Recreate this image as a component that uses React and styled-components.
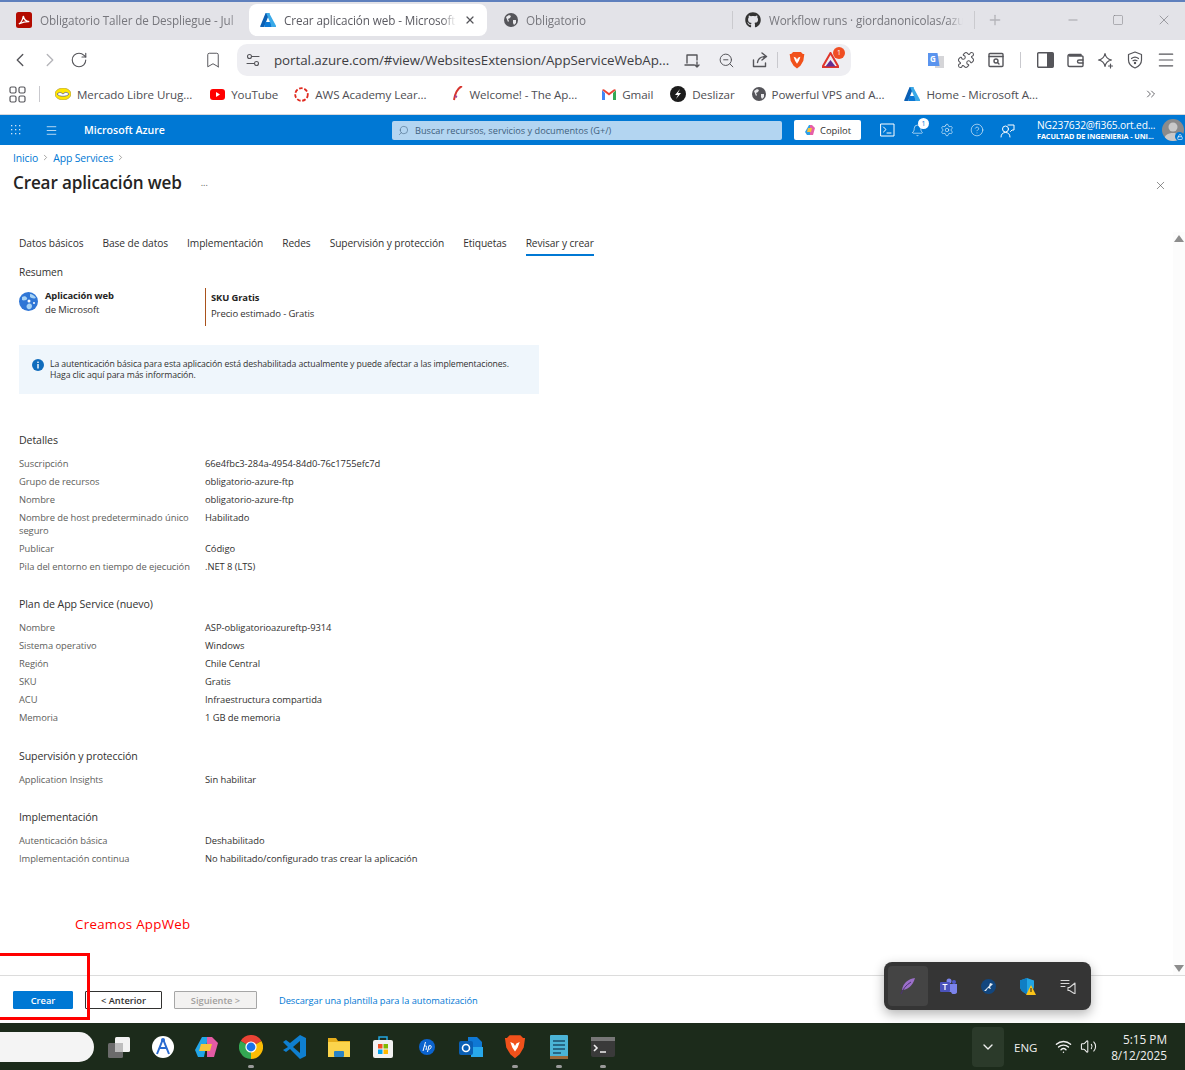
import React from "react";
import styled, { createGlobalStyle } from "styled-components";
import {
  Bell,
  ChevronDown,
  ChevronLeft,
  ChevronRight,
  ChevronsRight,
  CircleHelp,
  Lock,
  Menu,
  Minus,
  Plus,
  Puzzle,
  RotateCw,
  Search,
  Settings,
  Square,
  Wifi,
  X,
  Volume2,
  ZoomOut,
  Bookmark,
} from "lucide-react";
import { FaGithub } from "react-icons/fa";

const FONT = `"Open Sans", "Noto Sans", sans-serif`;

const Global = createGlobalStyle`
  html, body { margin: 0; padding: 0; background: #fff; }
  body { font-family: ${FONT}; color: #323130; }
  * { box-sizing: border-box; }
`;

const Page = styled.div`
  position: relative;
  width: 1185px;
  height: 1070px;
  overflow: hidden;
  display: flex;
  flex-direction: column;
  background: #fff;
`;

/* browser chrome */
const TabStrip = styled.div`
  height: 40px;
  flex: none;
  display: flex;
  align-items: flex-start;
  padding: 2px 0 0 11px;
  background: #e3e3e8;
  border-top: 2px solid #5f80bd;
`;
const BrowserTab = styled.div`
  width: ${(p) => p.$w}px;
  height: 32px;
  flex: none;
  display: flex;
  align-items: center;
  gap: 8px;
  padding: 0 ${(p) => p.$pad || 5}px;
  font-size: 11.7px;
  letter-spacing: -0.1px;
  color: ${(p) => (p.$active ? "#5b5b62" : "#77777d")};
  background: ${(p) => (p.$active ? "#fff" : "transparent")};
  border-radius: ${(p) => (p.$active ? "8px" : "0")};
  position: relative;
  ${(p) =>
    p.$sep &&
    `&::after{content:"";position:absolute;right:0;top:7px;height:18px;width:1px;background:#cacace;}`}
`;
const TabTitle = styled.span`
  flex: 1;
  min-width: 0;
  white-space: nowrap;
  overflow: hidden;
  mask-image: linear-gradient(to right, #000 92%, transparent);
`;
const PlusSlot = styled.div`
  width: 40px;
  flex: none;
  height: 32px;
  display: flex;
  align-items: center;
  justify-content: center;
  color: #b4b4b9;
`;
const WindowButtons = styled.div`
  margin-left: auto;
  width: 135px;
  height: 32px;
  display: flex;
  align-items: center;
  gap: 32px;
  padding-left: 16px;
  color: #77777d;
`;
const Toolbar = styled.div`
  height: 40px;
  flex: none;
  display: flex;
  align-items: center;
  color: #55555a;
  background: #fff;
  padding-left: 9px;
`;
const NavGroup = styled.div`
  display: flex;
  align-items: center;
  gap: 8px;
  width: 228px;
`;
const AddressBar = styled.div`
  width: 614px;
  height: 32px;
  flex: none;
  display: flex;
  align-items: center;
  border-radius: 10px;
  background: #eeeef2;
  padding: 0 12px 0 9px;
`;
const Url = styled.span`
  flex: 1;
  margin-left: 14px;
  font-size: 13.35px;
  letter-spacing: -0.05px;
  color: #3d3d42;
  white-space: nowrap;
`;
const BarIcons = styled.div`
  display: flex;
  align-items: center;
  gap: 17px;
`;
const BarDivider = styled.div`
  width: 1px;
  height: 16px;
  background: #c9c9ce;
  margin: ${(p) => p.$m || "0"};
`;
const ExtIcons = styled.div`
  display: flex;
  align-items: center;
  gap: 13px;
  margin-left: 77px;
`;
const Bookmarks = styled.div`
  height: 35px;
  flex: none;
  display: flex;
  align-items: center;
  padding: 0 0 6px 9px;
  background: #fff;
  border-bottom: 1px solid #d8d8dc;
  color: #55555a;
  font-size: 11.6px;
  letter-spacing: -0.08px;
`;
const BookmarkItem = styled.div`
  display: flex;
  align-items: center;
  gap: 6px;
  margin-left: ${(p) => p.$ml}px;
  white-space: nowrap;
  color: #4e4e53;
`;

/* portal header */
const PortalBar = styled.header`
  height: 30px;
  flex: none;
  display: flex;
  align-items: center;
  background: #0078d4;
  color: #fff;
  padding-left: 10px;
`;
const Brand = styled.div`
  width: 347px;
  margin-left: 23px;
  display: flex;
  align-items: center;
  gap: 26px;
  font-size: 10.6px;
  font-weight: 600;
`;
const SearchBox = styled.div`
  width: 390px;
  height: 19px;
  flex: none;
  display: flex;
  align-items: center;
  gap: 6px;
  padding-left: 6px;
  border-radius: 2px;
  background: #b3d5f1;
  font-size: 9.2px;
  color: #3f5f7d;
`;
const CopilotButton = styled.div`
  width: 67px;
  height: 20px;
  margin-left: 12px;
  flex: none;
  display: flex;
  align-items: center;
  justify-content: center;
  gap: 4px;
  border-radius: 2px;
  background: #fff;
  color: #323130;
  font-size: 9.4px;
  font-weight: 500;
`;
const PortalIcons = styled.div`
  margin-left: 19px;
  display: flex;
  align-items: center;
  gap: 16px;
  width: 157px;
`;
const BellSlot = styled.div`
  position: relative;
  display: flex;
`;
const BellBadge = styled.span`
  position: absolute;
  top: -6px;
  right: -5px;
  width: 11px;
  height: 11px;
  border-radius: 50%;
  background: #fff;
  color: #0078d4;
  font-size: 7px;
  line-height: 11px;
  text-align: center;
`;
const Account = styled.div`
  width: 125px;
  flex: none;
  font-size: 10.2px;
  line-height: 12px;
  letter-spacing: -0.15px;
  white-space: nowrap;
`;
const AccountOrg = styled.div`
  font-size: 7.3px;
  font-weight: 700;
  line-height: 11px;
  letter-spacing: -0.1px;
`;
const AvatarSlot = styled.div`
  position: relative;
  width: 22px;
  height: 22px;
  flex: none;
`;
const Avatar = styled.div`
  width: 22px;
  height: 22px;
  border-radius: 50%;
  background: #8b8b8b;
  overflow: hidden;
  display: flex;
`;
const LockBadge = styled.span`
  position: absolute;
  right: 0;
  bottom: 0;
  width: 9px;
  height: 9px;
  display: flex;
  align-items: center;
  justify-content: center;
  border-radius: 50%;
  background: #0078d4;
`;

/* blade */
const Blade = styled.main`
  flex: 1;
  min-height: 0;
  display: flex;
  flex-direction: column;
`;
const BladeHead = styled.div`
  height: 87px;
  flex: none;
  padding: 6px 18px 0 13px;
`;
const Breadcrumb = styled.div`
  display: flex;
  align-items: center;
  gap: 3px;
  height: 13px;
  font-size: 10.4px;
  letter-spacing: -0.1px;
  color: #0078d4;
`;
const TitleRow = styled.div`
  margin-top: 6px;
  display: flex;
  align-items: center;
  height: 24px;
`;
const Title = styled.h1`
  margin: 0;
  font-size: 17.1px;
  font-weight: 600;
  letter-spacing: -0.15px;
  color: #252423;
`;
const More = styled.span`
  margin-left: 19px;
  font-size: 9px;
  color: #605e5c;
`;
const CloseSlot = styled.div`
  margin-left: auto;
  margin-top: 7px;
  display: flex;
  color: #555;
`;
const BladeBody = styled.div`
  flex: 1;
  min-height: 0;
  display: flex;
`;
const Scroller = styled.div`
  flex: 1;
  min-width: 0;
  padding-left: 19px;
`;
const ScrollRail = styled.div`
  width: 12px;
  flex: none;
  display: flex;
  flex-direction: column;
  justify-content: space-between;
  align-items: center;
  padding: 3px 0 3px;
  background: #fcfcfc;
`;
const Arrow = styled.div`
  width: 0;
  height: 0;
  border-left: 5px solid transparent;
  border-right: 5px solid transparent;
  ${(p) => (p.$down ? "border-top: 7px solid #8d8d8d;" : "border-bottom: 7px solid #8d8d8d;")}
`;
const FormTabs = styled.nav`
  display: flex;
  gap: 19px;
  height: 24px;
`;
const FormTab = styled.div`
  height: 24px;
  line-height: 22px;
  font-size: 10.2px;
  letter-spacing: -0.08px;
  white-space: nowrap;
  color: #323130;
  border-bottom: 2px solid ${(p) => (p.$active ? "#0078d4" : "transparent")};
`;
const Resumen = styled.div`
  margin-top: 9px;
  font-size: 10.2px;
  line-height: 14px;
  letter-spacing: -0.1px;
`;
const Summary = styled.section`
  margin-top: 9px;
  display: flex;
  height: 38px;
`;
const Product = styled.div`
  width: 186px;
  display: flex;
  gap: 7px;
  padding-top: 1px;
`;
const ProductIcon = styled.div`
  padding-top: 3px;
  display: flex;
`;
const Strong = styled.div`
  font-size: 9.4px;
  font-weight: 700;
  line-height: 14px;
  letter-spacing: -0.1px;
  color: #252423;
`;
const Muted = styled.div`
  font-size: 9.5px;
  line-height: 14px;
  letter-spacing: -0.1px;
`;
const Sku = styled.div`
  border-left: 1px solid #a9521c;
  padding: 3px 0 0 5px;
  & > div + div {
    margin-top: 2px;
  }
`;
const Banner = styled.div`
  margin-top: 19px;
  width: 520px;
  height: 49px;
  display: flex;
  gap: 6px;
  padding: 14px 12px 0 13px;
  background: #eff6fc;
  font-size: 8.7px;
  line-height: 11px;
  letter-spacing: -0.1px;
  color: #323130;
`;
const BannerIcon = styled.div`
  display: flex;
  flex: none;
  width: 12px;
`;
const Group = styled.section`
  margin-top: ${(p) => p.$mt}px;
`;
const GroupTitle = styled.h2`
  margin: 0 0 8px;
  font-size: 10.6px;
  font-weight: 500;
  line-height: 14px;
  letter-spacing: -0.1px;
  color: #323130;
`;
const Row = styled.div`
  display: grid;
  grid-template-columns: 186px 1fr;
  padding: 2px 0 3px;
  font-size: 9.4px;
  line-height: 13px;
  letter-spacing: -0.06px;
`;
const RowLabel = styled.div`
  color: #605e5c;
  padding-right: 8px;
`;
const RowValue = styled.div`
  color: #323130;
`;
const Footer = styled.footer`
  height: 48px;
  flex: none;
  display: flex;
  align-items: center;
  gap: 12px;
  padding: 1px 0 0 13px;
  border-top: 1px solid #dcdcdc;
`;
const ActionButton = styled.button`
  width: ${(p) => p.$w}px;
  height: 18px;
  padding: 0;
  border-radius: 1px;
  font-family: ${FONT};
  font-size: 9.3px;
  font-weight: 600;
  ${(p) =>
    p.$kind === "primary"
      ? "background:#0078d4;border:1px solid #0078d4;color:#fff;"
      : p.$kind === "disabled"
      ? "background:#f3f2f1;border:1px solid #a6a6a6;color:#a19f9d;"
      : "background:#fff;border:1px solid #323130;color:#323130;"}
`;
const DownloadLink = styled.span`
  margin-left: 10px;
  font-size: 9.3px;
  letter-spacing: -0.05px;
  color: #0078d4;
`;

/* taskbar */
const Taskbar = styled.div`
  height: 47px;
  flex: none;
  display: flex;
  align-items: center;
  background: #1c2b1b;
  color: #f0f0f0;
`;
const SearchPill = styled.div`
  width: 94px;
  height: 30px;
  flex: none;
  background: #f4f4f4;
  border-radius: 0 15px 15px 0;
`;
const AppRow = styled.div`
  margin-left: 3px;
  display: flex;
`;
const AppSlot = styled.div`
  position: relative;
  width: 44px;
  height: 47px;
  display: flex;
  align-items: center;
  justify-content: center;
  ${(p) =>
    p.$open &&
    `&::after{content:"";position:absolute;left:19px;bottom:2px;width:6px;height:3px;border-radius:2px;background:#9a9a9a;}`}
`;
const TrayArea = styled.div`
  margin-left: auto;
  display: flex;
  align-items: center;
  height: 47px;
`;
const TrayToggle = styled.div`
  width: 32px;
  height: 40px;
  display: flex;
  align-items: center;
  justify-content: center;
  border-radius: 4px;
  background: #2b3a2a;
`;
const Lang = styled.div`
  margin: 1px 0 0 10px;
  font-size: 11.5px;
  width: 30px;
`;
const TrayStatus = styled.div`
  margin-left: 11px;
  display: flex;
  align-items: center;
  gap: 8px;
`;
const Clock = styled.div`
  margin: 0 18px 0 12px;
  text-align: right;
  font-size: 11.8px;
  line-height: 16px;
  width: 58px;
`;

/* overlays */
const TrayPopup = styled.div`
  position: absolute;
  left: 884px;
  top: 962px;
  width: 207px;
  height: 48px;
  display: flex;
  align-items: center;
  padding-left: 4px;
  border-radius: 8px;
  background: #353535;
  box-shadow: 0 4px 12px rgba(0, 0, 0, 0.3);
`;
const PopupSlot = styled.div`
  width: 40px;
  height: 40px;
  display: flex;
  align-items: center;
  justify-content: center;
  border-radius: 4px;
  background: ${(p) => (p.$hot ? "#444" : "transparent")};
`;
const RedBox = styled.div`
  position: absolute;
  left: -10px;
  top: 953px;
  width: 100px;
  height: 67px;
  border: 3px solid #f00;
`;
const RedNote = styled.div`
  position: absolute;
  left: 75px;
  top: 915px;
  font-size: 13.3px;
  line-height: 18px;
  letter-spacing: 0.3px;
  color: #f00;
`;

/* drawn logos */
const AzureLogo = ({ size = 16 }) => (
  <svg width={size} height={size} viewBox="0 0 16 16">
    <path d="M5.6 1h4L4.3 14.6a.7.7 0 0 1-.7.4H.8a.6.6 0 0 1-.6-.8z" fill="#0a5fb4" />
    <path d="M11.6 10H5.2l-1 4.9h7.6z" fill="#0b78d4" />
    <path d="M9.4 1.4c-.1-.3-.4-.4-.7-.4H5.6c.3 0 .6.1.7.4l5.5 13.2c.1.2.3.4.6.4h3.2a.6.6 0 0 0 .6-.8z" fill="#39a9e8" />
  </svg>
);
const PdfLogo = () => (
  <svg width="16" height="16" viewBox="0 0 16 16">
    <rect width="16" height="16" rx="2.5" fill="#b30b00" />
    <path d="M2.8 12c2-1 4-5 4.500-8 .6 3 3 5.500 6 5.700-3-.2-7 .8-10.500 2.300z" fill="none" stroke="#fff" strokeWidth="1.300" />
  </svg>
);
const GlobeLogo = ({ size = 14, color = "#55555a" }) => (
  <svg width={size} height={size} viewBox="0 0 14 14">
    <circle cx="7" cy="7" r="7" fill={color} />
    <path d="M2 4l3-2 2 1-1 2-2 1 1 2-1 1zM9 7l3 0 0 3-2 2-1-2z" fill="#e9e9ec" />
  </svg>
);
const BraveLogo = ({ size = 16 }) => (
  <svg width={size} height={size * 1.1} viewBox="0 0 16 18">
    <path d="M4 1h8l2 2 1.500 0-1 7-3 5-3.500 3-3.500-3-3-5-1-7H2z" fill="#f1511b" />
    <path d="M4.500 6l2.500 1 1 2 1-2 2.500-1-1.500 4-2 3-2-3z" fill="#fff" />
  </svg>
);
const BatBadge = styled.span`
  position: absolute;
  top: -5px;
  right: -6px;
  width: 12px;
  height: 12px;
  border-radius: 50%;
  background: #f04e23;
  color: #fff;
  font-size: 7px;
  line-height: 12px;
  text-align: center;
`;
const BatWrap = styled.span`
  position: relative;
  display: flex;
`;
const BatLogo = () => (
  <BatWrap>
    <svg width="17" height="16" viewBox="0 0 17 16">
      <path d="M8.500 1L16.500 15H.5z" fill="none" stroke="#e0352b" strokeWidth="2" />
      <path d="M8.500 8l5 6.500h-10z" fill="#662d91" />
    </svg>
    <BatBadge>1</BatBadge>
  </BatWrap>
);
const GoogleTranslate = () => (
  <svg width="16" height="17" viewBox="0 0 16 17">
    <rect x="7" y="4" width="9" height="12" fill="#d5d5d8" />
    <path d="M0 1h9.500l2 13H0z" fill="#5a94ee" />
    <text x="2" y="10" fontSize="8" fontWeight="700" fill="#fff" fontFamily="Open Sans, sans-serif">G</text>
  </svg>
);
const Stroke = ({ w = 18, h = 18, vb = "0 0 18 18", children, color = "#55555a", sw = 1.4 }) => (
  <svg width={w} height={h} viewBox={vb} fill="none" stroke={color} strokeWidth={sw} strokeLinecap="round" strokeLinejoin="round">
    {children}
  </svg>
);
const SiteSettings = () => (
  <Stroke w={14} h={14} vb="0 0 14 14" sw={1.1}>
    <circle cx="3.500" cy="3.500" r="2" />
    <path d="M6 3.500h7M1 10.500h7" />
    <circle cx="10.500" cy="10.500" r="2" />
  </Stroke>
);
const CastIcon = () => (
  <Stroke w={17} h={15} vb="0 0 17 15">
    <path d="M3 10V2h10v5M1 12h9M13 9v5M11 12l2 2 2-2" />
  </Stroke>
);
const ShareIcon = () => (
  <Stroke w={16} h={16} vb="0 0 16 16">
    <path d="M1.500 8v6.500h12V11M14.500 4.500L10 1M14.500 4.500L10 8M14.500 4.500c-6 0-8.500 2-9 6" />
  </Stroke>
);
const SearchTabIcon = () => (
  <Stroke w={16} h={16} vb="0 0 16 16">
    <rect x="1" y="1.500" width="14" height="13" rx="1" />
    <path d="M1 4.500h14" />
    <circle cx="8" cy="9" r="2" />
    <path d="M9.500 10.500l1.500 1.500" />
  </Stroke>
);
const SidePanelIcon = () => (
  <svg width="17" height="16" viewBox="0 0 17 16">
    <rect x=".7" y=".7" width="15.600" height="14.600" rx="1" fill="#fff" stroke="#55555a" strokeWidth="1.400" />
    <rect x="10" y="1" width="6" height="14" fill="#55555a" />
  </svg>
);
const WalletIcon = () => (
  <Stroke w={17} h={15} vb="0 0 17 15">
    <path d="M14 3V1.500H2.500C1.500 1.500 1 2.300 1 3v9c0 1 .7 1.500 1.500 1.500H15c.6 0 1-.4 1-1V4c0-.6-.4-1-1-1H2.500" />
    <path d="M16 7h-4a1.500 1.500 0 0 0 0 3h4" />
  </Stroke>
);
const StarPlus = () => (
  <Stroke w={17} h={17} vb="0 0 17 17" sw={1.2}>
    <path d="M8 1.500c.7 4 2.500 5.800 6.500 6.500-4 .7-5.800 2.500-6.500 6.500C7.300 10.500 5.500 8.700 1.500 8 5.500 7.300 7.300 5.500 8 1.500z" />
    <path d="M13.500 12v4M11.500 14h4" />
  </Stroke>
);
const ShieldWifi = () => (
  <Stroke w={16} h={18} vb="0 0 16 18" sw={1.2}>
    <path d="M8 1l6.500 2.500V9c0 4-3 6.500-6.500 8-3.500-1.500-6.500-4-6.500-8V3.500z" />
    <path d="M4.500 7.500c2-1.600 5-1.600 7 0M6 9.700c1.200-.8 2.800-.8 4 0" />
    <circle cx="8" cy="12" r=".6" />
  </Stroke>
);
const MercadoLogo = () => (
  <svg width="16" height="12" viewBox="0 0 16 12">
    <ellipse cx="8" cy="6" rx="8" ry="6" fill="#ffe600" stroke="#a98e2b" strokeWidth=".6" />
    <path d="M2 6c2-1.500 3-2 4.500-1L8 6l2-1.500c1.500-.5 3 .5 4 1.500-2 3-10 3-12 0z" fill="#fff" stroke="#39408a" strokeWidth=".6" />
  </svg>
);
const YoutubeLogo = () => (
  <svg width="15" height="11" viewBox="0 0 15 11">
    <rect width="15" height="11" rx="3" fill="#f00" />
    <path d="M6 3l4 2.500L6 8z" fill="#fff" />
  </svg>
);
const AwsRing = () => (
  <svg width="15" height="15" viewBox="0 0 15 15">
    <circle cx="7.500" cy="7.500" r="6.300" fill="none" stroke="#e0291e" strokeWidth="1.800" strokeDasharray="3.600 1.700" />
  </svg>
);
const FeatherLogo = () => (
  <svg width="12" height="16" viewBox="0 0 12 16">
    <path d="M10 0C6 2 3 7 2 14" fill="none" stroke="#d6352f" strokeWidth="2" />
    <path d="M3 10l2 1" stroke="#a2459a" strokeWidth="2" />
  </svg>
);
const GmailLogo = () => (
  <svg width="14" height="11" viewBox="0 0 14 11">
    <path d="M0 1v10h3V4z" fill="#4285f4" />
    <path d="M14 1v10h-3V4z" fill="#34a853" />
    <path d="M0 1c1-1 2-1 3 0l4 3 4-3c1-1 2-1 3 0l-7 5.500z" fill="#ea4335" />
  </svg>
);
const SlideLogo = () => (
  <svg width="16" height="16" viewBox="0 0 16 16">
    <circle cx="8" cy="8" r="8" fill="#1c1c1c" />
    <path d="M10 3L5 9h3l-2 4 5-6H8z" fill="#fff" />
  </svg>
);
const WebAppIcon = () => (
  <svg width="19" height="19" viewBox="0 0 19 19">
    <circle cx="9.500" cy="9.500" r="9.500" fill="#2f76d6" />
    <path d="M3 5c2-1 4-1 5 1S5 9 3 8zM11 2c2 0 5 2 6 4-2 1-5 0-6-1zM9 12c2-1 4 0 4 2s-2 4-4 3-2-4 0-5z" fill="#a8d3f5" />
    <circle cx="10" cy="9" r="1.500" fill="#fff" />
    <circle cx="15" cy="11" r="1" fill="#fff" />
  </svg>
);
const InfoDot = () => (
  <svg width="12" height="12" viewBox="0 0 12 12">
    <circle cx="6" cy="6" r="6" fill="#0f6cbd" />
    <rect x="5.300" y="5" width="1.400" height="4.500" fill="#fff" />
    <rect x="5.300" y="2.600" width="1.400" height="1.400" fill="#fff" />
  </svg>
);
const CopilotLogo = ({ size = 12 }) => (
  <svg width={size} height={size} viewBox="0 0 12 12">
    <path d="M5 1h3L6 11H3L1 8z" fill="#2d9ee8" />
    <path d="M6 1h2l3 3-2 7H6z" fill="#e65fa8" />
    <path d="M4 4h4L7 8H3z" fill="#f3c13a" />
  </svg>
);
const ConsoleIcon = () => (
  <Stroke w={15} h={14} vb="0 0 15 14" color="#fff" sw={1}>
    <rect x="1" y="1" width="13" height="12" />
    <path d="M3.500 4l2.500 2.500L3.500 9M7 10h4" />
  </Stroke>
);
const FeedbackIcon = () => (
  <Stroke w={15} h={15} vb="0 0 15 15" color="#fff" sw={1}>
    <circle cx="5.500" cy="6" r="3" />
    <path d="M1 14c0-3 2-4.500 4.500-4.500S10 11 10 14M8 2h6v5h-2l-1.500 1.500" />
  </Stroke>
);
const PersonIcon = () => (
  <svg width="22" height="22" viewBox="0 0 22 22">
    <circle cx="11" cy="8" r="4.500" fill="#c9c9c9" />
    <path d="M2 22c0-6 4-8 9-8s9 2 9 8z" fill="#c9c9c9" />
  </svg>
);
const ChromeLogo = () => (
  <svg width="24" height="24" viewBox="0 0 24 24">
    <path d="M12 12L1.600 6A12 12 0 0 1 22.400 6z" fill="#ea4335" />
    <path d="M12 12l10.400-6A12 12 0 0 1 12 24z" fill="#fbbc04" />
    <path d="M12 12v12A12 12 0 0 1 1.600 6z" fill="#34a853" />
    <circle cx="12" cy="12" r="5.600" fill="#fff" />
    <circle cx="12" cy="12" r="4.400" fill="#1a73e8" />
  </svg>
);
const VsCode = () => (
  <svg width="24" height="24" viewBox="0 0 24 24">
    <path d="M17 0l6 3v18l-6 3-10-10-4 3-3-2 5-3-5-5 3-2 4 3z" fill="#0f7fd0" />
    <path d="M17 6v12l-7-6z" fill="#1c2b1b" />
  </svg>
);
const Folder = () => (
  <svg width="24" height="22" viewBox="0 0 24 22">
    <path d="M1 2h8l2 3h12v16H1z" fill="#e5ad1b" />
    <path d="M1 6h22v15H1z" fill="#fbd44c" />
    <rect x="7" y="15" width="10" height="6" rx="1" fill="#2a83c6" />
  </svg>
);
const StoreLogo = () => (
  <svg width="22" height="24" viewBox="0 0 22 24">
    <path d="M7 5V2h8v3" fill="none" stroke="#22a7e0" strokeWidth="1.500" />
    <rect x="1" y="5" width="20" height="18" rx="2" fill="#f2f2f2" />
    <rect x="6" y="9" width="4.500" height="4.500" fill="#f25022" />
    <rect x="11.500" y="9" width="4.500" height="4.500" fill="#7fba00" />
    <rect x="6" y="14.500" width="4.500" height="4.500" fill="#00a4ef" />
    <rect x="11.500" y="14.500" width="4.500" height="4.500" fill="#ffb900" />
  </svg>
);
const HpLogo = () => (
  <svg width="16" height="16" viewBox="0 0 16 16">
    <circle cx="8" cy="8" r="8" fill="#0b63ce" />
    <path d="M6.500 3L4 12M5.500 7.500c1.500-1 2.500-.6 2 1L7 11M10 6.500L8.500 13M10 7c2-1 2.500 0 2 1.500S10.500 10.500 9.500 10" fill="none" stroke="#fff" strokeWidth="1" />
  </svg>
);
const OutlookLogo = () => (
  <svg width="24" height="24" viewBox="0 0 24 24">
    <path d="M9 2h9l5 5v12H9z" fill="#0f78d4" />
    <path d="M12 12h12v10H12z" fill="#28a8ea" />
    <rect x="0" y="6" width="14" height="14" rx="2" fill="#0a5fb4" />
    <circle cx="7" cy="13" r="3.500" fill="none" stroke="#fff" strokeWidth="1.600" />
  </svg>
);
const Notepad = () => (
  <svg width="18" height="24" viewBox="0 0 18 24">
    <rect width="18" height="23" rx="1" fill="#4bb4d6" />
    <rect y="21" width="18" height="3" fill="#9b6a3b" />
    <path d="M3 6h12M3 10h12M3 14h12M3 18h8" stroke="#1d4e6b" strokeWidth="1.500" />
  </svg>
);
const TerminalLogo = () => (
  <svg width="24" height="20" viewBox="0 0 24 20">
    <rect width="24" height="20" rx="2" fill="#3a3a3a" />
    <rect width="24" height="4" fill="#777" />
    <path d="M3 8l3 3-3 3M9 15h6" fill="none" stroke="#eee" strokeWidth="1.600" />
  </svg>
);
const TaskViewIcon = () => (
  <svg width="24" height="22" viewBox="0 0 24 22">
    <rect x="8" y="1" width="15" height="15" rx="1.500" fill="#f2f2f2" />
    <rect x="1" y="7" width="15" height="15" rx="1.500" fill="#6b6b6b" />
    <rect x="8" y="7" width="8" height="9" fill="#bdbdbd" />
  </svg>
);
const CircleApp = () => (
  <svg width="24" height="24" viewBox="0 0 24 24">
    <circle cx="12" cy="12" r="11" fill="#fff" />
    <path d="M12 4L6 19M12 4l6 15M8 13h8" fill="none" stroke="#2a6bd0" strokeWidth="2" />
    <circle cx="12" cy="5" r="2" fill="#2a6bd0" />
  </svg>
);
const CopilotTask = () => (
  <svg width="24" height="22" viewBox="0 0 24 22">
    <path d="M7 1h6L9 21H3L0 14z" fill="#22a6e8" />
    <path d="M12 1h5l6 6-4 14h-7z" fill="#e45aa4" />
    <path d="M6 8h11l-2 7H4z" fill="#f5c33b" />
  </svg>
);
const Quill = () => (
  <svg width="16" height="18" viewBox="0 0 16 18">
    <path d="M15 1C8 2 3 6 2 13c5 0 11-4 13-12z" fill="#9b6fc9" />
    <path d="M1 17C3 12 6 8 11 5" stroke="#4f3078" strokeWidth="1" fill="none" />
  </svg>
);
const TeamsLogo = () => (
  <svg width="17" height="16" viewBox="0 0 17 16">
    <circle cx="9" cy="3" r="2.500" fill="#7b83eb" />
    <circle cx="14" cy="4" r="2" fill="#5059c9" />
    <path d="M6 6h11v6a3 3 0 0 1-6 2H6z" fill="#7b83eb" />
    <rect y="4" width="10" height="10" rx="1" fill="#4b53bc" />
    <path d="M2.500 6.500h5M5 6.500V12" stroke="#fff" strokeWidth="1.200" />
  </svg>
);
const ToolLogo = () => (
  <svg width="15" height="15" viewBox="0 0 15 15">
    <circle cx="7.500" cy="7.500" r="7.500" fill="#12467e" />
    <path d="M3 12l5-5 1-3 3 1-2 2-1 1 1 2-3-1-2 3z" fill="#e6eef5" />
  </svg>
);
const ShieldWarn = () => (
  <svg width="16" height="17" viewBox="0 0 16 17">
    <path d="M7 0l7 2.500V8c0 4-3 6.500-7 8-4-1.500-7-4-7-8V2.500z" fill="#22a5e4" />
    <path d="M7 0v16C3 14.500 0 12 0 8V2.500z" fill="#0f7ec4" />
    <path d="M11 7l5 10H6z" fill="#fcc419" />
    <rect x="10.500" y="10" width="1" height="4" fill="#222" />
  </svg>
);
const MediaIcon = () => (
  <Stroke w={16} h={15} vb="0 0 16 15" color="#d8d8d8" sw={1.100}>
    <path d="M1 1.500h8M1 4.500h8M1 7.500h4M9.500 8.500L15 4v11l-5.500-3.500H8v-3z" />
  </Stroke>
);

const BROWSER_TABS = [
  { w: 238, pad: 5, icon: <PdfLogo />, title: "Obligatorio Taller de Despliegue - Jul" },
  {
    w: 238,
    pad: 11,
    active: true,
    icon: <AzureLogo />,
    title: "Crear aplicación web - Microsoft",
    close: true,
  },
  { w: 246, pad: 17, sep: true, icon: <GlobeLogo />, title: "Obligatorio" },
  { w: 242, pad: 12, sep: true, icon: <FaGithub size={16} color="#333" />, title: "Workflow runs · giordanonicolas/azu" },
];

const BOOKMARKS = [
  { ml: 15, icon: <MercadoLogo />, text: "Mercado Libre Urug..." },
  { ml: 18, icon: <YoutubeLogo />, text: "YouTube" },
  { ml: 16, icon: <AwsRing />, text: "AWS Academy Lear..." },
  { ml: 25, icon: <FeatherLogo />, text: "Welcome! - The Ap..." },
  { ml: 25, icon: <GmailLogo />, text: "Gmail" },
  { ml: 17, icon: <SlideLogo />, text: "Deslizar" },
  { ml: 17, icon: <GlobeLogo />, text: "Powerful VPS and A..." },
  { ml: 20, icon: <AzureLogo />, text: "Home - Microsoft A..." },
];

const FORM_TABS = [
  "Datos básicos",
  "Base de datos",
  "Implementación",
  "Redes",
  "Supervisión y protección",
  "Etiquetas",
  "Revisar y crear",
];

const GROUPS = [
  {
    mt: 39,
    title: "Detalles",
    rows: [
      ["Suscripción", "66e4fbc3-284a-4954-84d0-76c1755efc7d"],
      ["Grupo de recursos", "obligatorio-azure-ftp"],
      ["Nombre", "obligatorio-azure-ftp"],
      ["Nombre de host predeterminado único seguro", "Habilitado"],
      ["Publicar", "Código"],
      ["Pila del entorno en tiempo de ejecución", ".NET 8 (LTS)"],
    ],
  },
  {
    mt: 21,
    title: "Plan de App Service (nuevo)",
    rows: [
      ["Nombre", "ASP-obligatorioazureftp-9314"],
      ["Sistema operativo", "Windows"],
      ["Región", "Chile Central"],
      ["SKU", "Gratis"],
      ["ACU", "Infraestructura compartida"],
      ["Memoria", "1 GB de memoria"],
    ],
  },
  {
    mt: 22,
    title: "Supervisión y protección",
    rows: [["Application Insights", "Sin habilitar"]],
  },
  {
    mt: 21,
    title: "Implementación",
    rows: [
      ["Autenticación básica", "Deshabilitado"],
      ["Implementación continua", "No habilitado/configurado tras crear la aplicación"],
    ],
  },
];

const TASK_APPS = [
  { icon: <TaskViewIcon /> },
  { icon: <CircleApp /> },
  { icon: <CopilotTask /> },
  { icon: <ChromeLogo />, open: true },
  { icon: <VsCode /> },
  { icon: <Folder /> },
  { icon: <StoreLogo /> },
  { icon: <HpLogo /> },
  { icon: <OutlookLogo /> },
  { icon: <BraveLogo size={22} />, open: true },
  { icon: <Notepad />, open: true },
  { icon: <TerminalLogo />, open: true },
];

export default function App() {
  return (
    <Page>
      <Global />
      <TabStrip>
        {BROWSER_TABS.map((t) => (
          <BrowserTab key={t.title} $w={t.w} $pad={t.pad} $active={t.active} $sep={t.sep}>
            {t.icon}
            <TabTitle>{t.title}</TabTitle>
            {t.close && <X size={12} strokeWidth={2.500} color="#55555a" />}
          </BrowserTab>
        ))}
        <PlusSlot>
          <Plus size={16} />
        </PlusSlot>
        <WindowButtons>
          <Minus size={14} strokeWidth={1} />
          <Square size={12} strokeWidth={1} />
          <X size={16} strokeWidth={1} />
        </WindowButtons>
      </TabStrip>

      <Toolbar>
        <NavGroup>
          <ChevronLeft size={22} strokeWidth={1.500} />
          <ChevronRight size={22} strokeWidth={1.500} color="#b5b5ba" />
          <RotateCw size={18} strokeWidth={1.500} style={{ marginLeft: 1 }} />
          <Bookmark size={18} strokeWidth={1.300} style={{ marginLeft: 108 }} />
        </NavGroup>
        <AddressBar>
          <SiteSettings />
          <Url>portal.azure.com/#view/WebsitesExtension/AppServiceWebAp...</Url>
          <BarIcons>
            <CastIcon />
            <ZoomOut size={17} strokeWidth={1.400} />
            <ShareIcon />
            <BarDivider $m="0 -6px 0 -8px" />
            <BraveLogo size={16} />
            <BatLogo />
          </BarIcons>
        </AddressBar>
        <ExtIcons>
          <GoogleTranslate />
          <Puzzle size={18} strokeWidth={1.400} />
          <SearchTabIcon />
          <BarDivider $m="0 3px" />
          <SidePanelIcon />
          <WalletIcon />
          <StarPlus />
          <ShieldWifi />
          <Menu size={20} strokeWidth={1.400} />
        </ExtIcons>
      </Toolbar>

      <Bookmarks>
        <svg width="17" height="17" viewBox="0 0 17 17" fill="none" stroke="#55555a" strokeWidth="1.200">
          <rect x="1" y="1" width="6" height="6" rx="1.500" />
          <rect x="10" y="1" width="6" height="6" rx="1.500" />
          <rect x="1" y="10" width="6" height="6" rx="1.500" />
          <rect x="10" y="10" width="6" height="6" rx="1.500" />
        </svg>
        <BarDivider $m="0 0 0 13px" />
        {BOOKMARKS.map((b) => (
          <BookmarkItem key={b.text} $ml={b.ml}>
            {b.icon}
            {b.text}
          </BookmarkItem>
        ))}
        <ChevronsRight size={14} strokeWidth={1.500} style={{ marginLeft: "auto", marginRight: 27 }} />
      </Bookmarks>

      <PortalBar>
        <svg width="12" height="12" viewBox="0 0 12 12" fill="#cfe4f6">
          {[1, 5, 9].flatMap((y) =>
            [1, 5, 9].map((x) => <rect key={`${x}-${y}`} x={x} y={y} width="1.300" height="1.300" />)
          )}
        </svg>
        <Brand>
          <Menu size={13} strokeWidth={1.300} />
          Microsoft Azure
        </Brand>
        <SearchBox>
          <Search size={11} strokeWidth={1.200} style={{ transform: "scaleX(-1)" }} />
          Buscar recursos, servicios y documentos (G+/)
        </SearchBox>
        <CopilotButton>
          <CopilotLogo />
          Copilot
        </CopilotButton>
        <PortalIcons>
          <ConsoleIcon />
          <BellSlot>
            <Bell size={13} strokeWidth={1.100} />
            <BellBadge>1</BellBadge>
          </BellSlot>
          <Settings size={14} strokeWidth={1} />
          <CircleHelp size={14} strokeWidth={1} />
          <FeedbackIcon />
        </PortalIcons>
        <Account>
          NG237632@fi365.ort.ed...
          <AccountOrg>FACULTAD DE INGENIERIA - UNI...</AccountOrg>
        </Account>
        <AvatarSlot>
          <Avatar>
            <PersonIcon />
          </Avatar>
          <LockBadge>
            <Lock size={6} color="#fff" strokeWidth={2.500} />
          </LockBadge>
        </AvatarSlot>
      </PortalBar>

      <Blade>
        <BladeHead>
          <Breadcrumb>
            Inicio
            <ChevronRight size={9} color="#8a8886" />
            App Services
            <ChevronRight size={9} color="#8a8886" />
          </Breadcrumb>
          <TitleRow>
            <Title>Crear aplicación web</Title>
            <More>...</More>
            <CloseSlot>
              <X size={13} strokeWidth={1.200} />
            </CloseSlot>
          </TitleRow>
        </BladeHead>
        <BladeBody>
          <Scroller>
            <FormTabs>
              {FORM_TABS.map((t) => (
                <FormTab key={t} $active={t === "Revisar y crear"}>
                  {t}
                </FormTab>
              ))}
            </FormTabs>
            <Resumen>Resumen</Resumen>
            <Summary>
              <Product>
                <ProductIcon>
                  <WebAppIcon />
                </ProductIcon>
                <div>
                  <Strong>Aplicación web</Strong>
                  <Muted>de Microsoft</Muted>
                </div>
              </Product>
              <Sku>
                <Strong>SKU Gratis</Strong>
                <Muted>Precio estimado - Gratis</Muted>
              </Sku>
            </Summary>
            <Banner>
              <BannerIcon>
                <InfoDot />
              </BannerIcon>
              <div>
                La autenticación básica para esta aplicación está deshabilitada actualmente y puede afectar a las
                implementaciones.
                <br />
                Haga clic aquí para más información.
              </div>
            </Banner>
            {GROUPS.map((g) => (
              <Group key={g.title} $mt={g.mt}>
                <GroupTitle>{g.title}</GroupTitle>
                {g.rows.map(([label, value]) => (
                  <Row key={label}>
                    <RowLabel>{label}</RowLabel>
                    <RowValue>{value}</RowValue>
                  </Row>
                ))}
              </Group>
            ))}
          </Scroller>
          <ScrollRail>
            <Arrow />
            <Arrow $down />
          </ScrollRail>
        </BladeBody>
        <Footer>
          <ActionButton $w={60} $kind="primary">
            Crear
          </ActionButton>
          <ActionButton $w={77}>&lt; Anterior</ActionButton>
          <ActionButton $w={83} $kind="disabled">
            Siguiente &gt;
          </ActionButton>
          <DownloadLink>Descargar una plantilla para la automatización</DownloadLink>
        </Footer>
      </Blade>

      <Taskbar>
        <SearchPill />
        <AppRow>
          {TASK_APPS.map((a, i) => (
            <AppSlot key={i} $open={a.open}>
              {a.icon}
            </AppSlot>
          ))}
        </AppRow>
        <TrayArea>
          <TrayToggle>
            <ChevronDown size={16} />
          </TrayToggle>
          <Lang>ENG</Lang>
          <TrayStatus>
            <Wifi size={17} />
            <Volume2 size={17} strokeWidth={1.500} />
          </TrayStatus>
          <Clock>
            5:15 PM
            <br />
            8/12/2025
          </Clock>
        </TrayArea>
      </Taskbar>

      <TrayPopup>
        <PopupSlot $hot>
          <Quill />
        </PopupSlot>
        <PopupSlot>
          <TeamsLogo />
        </PopupSlot>
        <PopupSlot>
          <ToolLogo />
        </PopupSlot>
        <PopupSlot>
          <ShieldWarn />
        </PopupSlot>
        <PopupSlot>
          <MediaIcon />
        </PopupSlot>
      </TrayPopup>
      <RedNote>Creamos AppWeb</RedNote>
      <RedBox />
    </Page>
  );
}
